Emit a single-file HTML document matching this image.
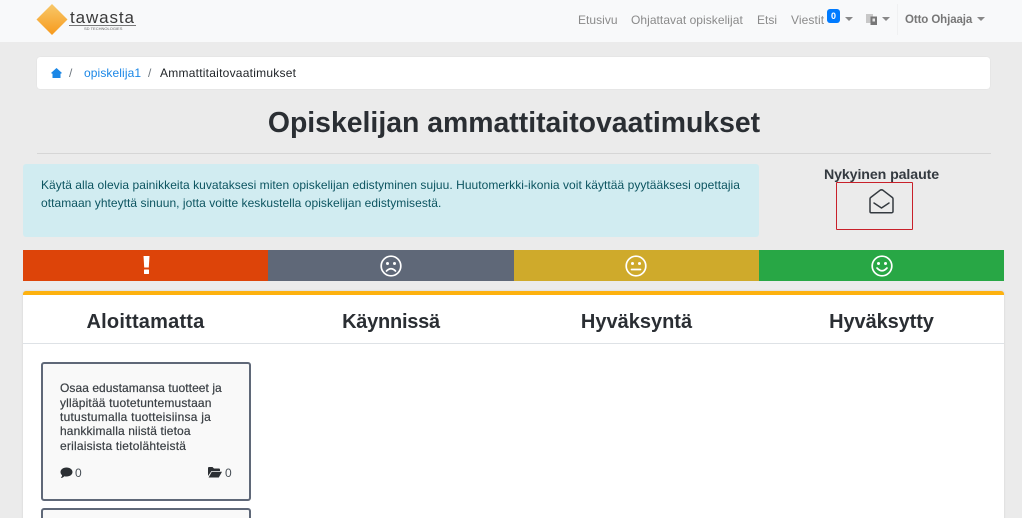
<!DOCTYPE html>
<html lang="fi"><head><meta charset="utf-8"><title>Opiskelijan ammattitaitovaatimukset</title>
<style>
html,body{margin:0;padding:0;width:1022px;height:518px;overflow:hidden}
body{background:#ebebeb;font-family:"Liberation Sans",sans-serif;color:#212529}
#w{position:relative;width:1022px;height:518px;overflow:hidden;background:#ebebeb}
.a{position:absolute;white-space:nowrap}
.nav{color:#8a8a8a;font-size:12px;top:13px;line-height:14px}
.h{font-size:20px;font-weight:bold;top:310px;line-height:24px;color:#2a2e33;transform:translateX(-50%)}
.bar{position:absolute;top:250px;height:31px}
.car{position:absolute;width:0;height:0;border-left:4px solid transparent;border-right:4px solid transparent;border-top:4px solid #888}
.l{position:absolute;left:60px;white-space:nowrap;font-size:12px;line-height:14px;color:#3a3f44;-webkit-text-stroke:.2px #3a3f44}
svg{position:absolute;overflow:visible}
</style></head><body><div id="w">
<div class="a" style="left:0;top:0;width:1022px;height:42px;background:#f8f9fa"></div>

<svg style="left:36px;top:4px" width="32" height="32" viewBox="0 0 32 32"><defs><linearGradient id="g" x1="0" y1="0" x2="0" y2="1"><stop offset="0" stop-color="#f7c86a"/><stop offset="1" stop-color="#f79a1c"/></linearGradient></defs><polygon points="16,0 31.500,15.500 16,31 .5,15.500" fill="url(#g)"/></svg>
<div class="a" style="left:70px;top:8px;font-size:17px;line-height:20px;color:#3a3a3a;letter-spacing:.9px">tawasta</div>
<div class="a" style="left:69px;top:25px;width:67px;height:1px;background:#777"></div>
<div class="a" style="left:84px;top:26px;font-size:4px;line-height:5px;color:#666">SD TECHNOLOGIES</div>

<div class="a nav" style="left:578px;letter-spacing:.03px">Etusivu</div>
<div class="a nav" style="left:631px;letter-spacing:.05px">Ohjattavat opiskelijat</div>
<div class="a nav" style="left:757px">Etsi</div>
<div class="a nav" style="left:791px;letter-spacing:.1px">Viestit</div>
<div class="a" style="left:827px;top:9px;width:13px;height:14px;background:#007bff;border-radius:3px;color:#fff;font-size:9px;font-weight:bold;line-height:14px;text-align:center">0</div>
<div class="car" style="left:845px;top:17px"></div>
<svg style="left:866px;top:14px" width="12" height="12" viewBox="0 0 12 12"><rect x="0" y="0" width="7" height="9" fill="#c8c8c8"/><rect x="4.500" y="2.500" width="6.500" height="8.500" fill="#777"/><rect x="6.500" y="4.500" width="2.500" height="3" fill="#e5e5e5"/></svg>
<div class="car" style="left:882px;top:17px"></div>
<div class="a" style="left:897px;top:4px;width:1px;height:31px;background:#f0f1f2"></div>
<div class="a nav" style="left:905px;font-size:11.500px;font-weight:bold;color:#777;letter-spacing:-.1px">Otto Ohjaaja</div>
<div class="car" style="left:977px;top:17px"></div>

<div class="a" style="left:37px;top:57px;width:953px;height:32px;background:#fff;border-radius:3px;box-shadow:0 0 1px rgba(0,0,0,.12)"></div>
<svg style="left:51px;top:68px" width="11" height="10" viewBox="0 0 11 10"><path d="M5.500 0 L11 5 L9.800 5.800 L9.500 5.500 V10 H1.500 V5.500 L1.200 5.800 L0 5 Z" fill="#1b87e6"/></svg>
<div class="a" style="left:69px;top:66px;font-size:12px;line-height:14px;color:#6c757d">/</div>
<div class="a" style="left:84px;top:66px;font-size:12px;line-height:14px;color:#1b87e6;letter-spacing:.1px">opiskelija1</div>
<div class="a" style="left:148px;top:66px;font-size:12px;line-height:14px;color:#6c757d">/</div>
<div class="a" style="left:160px;top:66px;font-size:12px;line-height:14px;color:#212529;letter-spacing:.24px">Ammattitaitovaatimukset</div>

<div class="a" style="left:514px;top:105px;transform:translateX(-50%);font-size:28.400px;line-height:36px;font-weight:bold;color:#2a2e33">Opiskelijan ammattitaitovaatimukset</div>
<div class="a" style="left:37px;top:153px;width:954px;height:1px;background:#d6d6d6"></div>

<div class="a" style="left:23px;top:164px;width:736px;height:73px;background:#d1ecf1;border-radius:3px"></div>
<div class="a" style="left:41px;top:176px;font-size:12px;line-height:18px;color:#0c5460;letter-spacing:.045px">Käytä alla olevia painikkeita kuvataksesi miten opiskelijan edistyminen sujuu. Huutomerkki-ikonia voit käyttää pyytääksesi opettajia<br>ottamaan yhteyttä sinuun, jotta voitte keskustella opiskelijan edistymisestä.</div>

<div class="a" style="left:881.500px;top:166px;transform:translateX(-50%);font-size:14.200px;line-height:18px;font-weight:bold;color:#343a40;letter-spacing:-.1px">Nykyinen palaute</div>
<div class="a" style="left:836px;top:182px;width:77px;height:48px;box-sizing:border-box;border:1.500px solid #c8202a;border-radius:1px"></div>
<svg style="left:869px;top:189px" width="25" height="25" viewBox="0 0 25 25" fill="none" stroke="#343a40" stroke-width="1.500" stroke-linejoin="round" stroke-linecap="round"><path d="M1 10.500 L1 9.800 Q1 9 1.800 8.400 L11 1.300 Q12.500 .3 14 1.300 L23.200 8.400 Q24 9 24 9.800 V22.500 a1.200 1.200 0 0 1 -1.200 1.200 H2.200 a1.200 1.200 0 0 1 -1.200 -1.200 Z"/><path d="M5 14 L12.500 19 L20 14"/></svg>

<div class="bar" style="left:23px;width:245px;background:#dd4409"></div>
<div class="bar" style="left:268px;width:246px;background:#5f6878"></div>
<div class="bar" style="left:514px;width:245px;background:#cfaa2b"></div>
<div class="bar" style="left:759px;width:245px;background:#28a745"></div>
<svg style="left:142px;top:255px" width="9" height="19" viewBox="0 0 9 19"><path d="M1.500 1 H7.500 L6.800 12.500 H2.200 Z" fill="#fff"/><rect x="2" y="14.500" width="5" height="4.500" rx=".5" fill="#fff"/></svg>
<svg style="left:380px;top:255px" width="22" height="22" viewBox="0 0 22 22" fill="none" stroke="#fff" stroke-width="1.700" stroke-linecap="round"><circle cx="11" cy="11" r="9.800"/><circle cx="7.500" cy="8.500" r="1.500" fill="#fff" stroke="none"/><circle cx="14.500" cy="8.500" r="1.500" fill="#fff" stroke="none"/><path d="M6.500 16 Q11 11.500 15.500 16"/></svg>
<svg style="left:625px;top:255px" width="22" height="22" viewBox="0 0 22 22" fill="none" stroke="#fff" stroke-width="1.700" stroke-linecap="round"><circle cx="11" cy="11" r="9.800"/><circle cx="7.500" cy="8.500" r="1.500" fill="#fff" stroke="none"/><circle cx="14.500" cy="8.500" r="1.500" fill="#fff" stroke="none"/><path d="M6.500 14.500 H15.500"/></svg>
<svg style="left:871px;top:255px" width="22" height="22" viewBox="0 0 22 22" fill="none" stroke="#fff" stroke-width="1.700" stroke-linecap="round"><circle cx="11" cy="11" r="9.800"/><circle cx="7.500" cy="8.500" r="1.500" fill="#fff" stroke="none"/><circle cx="14.500" cy="8.500" r="1.500" fill="#fff" stroke="none"/><path d="M6 13 Q11 18.500 16 13"/></svg>

<div class="a" style="left:23px;top:291px;width:981px;height:240px;background:#fff;border-top:4px solid #fdb10f;border-radius:3px 3px 0 0;box-sizing:border-box;box-shadow:0 0 2px rgba(0,0,0,.12)"></div>
<div class="a h" style="left:145.500px;letter-spacing:.2px">Aloittamatta</div>
<div class="a h" style="left:391px;letter-spacing:-.25px">Käynnissä</div>
<div class="a h" style="left:636.500px">Hyväksyntä</div>
<div class="a h" style="left:881.500px;letter-spacing:-.1px">Hyväksytty</div>
<div class="a" style="left:23px;top:343px;width:981px;height:1px;background:#dee2e6"></div>

<div class="a" style="left:41px;top:362px;width:210px;height:139px;box-sizing:border-box;background:#f9f9f9;border:2px solid #5f6878;border-radius:3px"></div>
<div class="l" style="top:381px;letter-spacing:.06px">Osaa edustamansa tuotteet ja</div>
<div class="l" style="top:396px;letter-spacing:.18px">ylläpitää tuotetuntemustaan</div>
<div class="l" style="top:410px;letter-spacing:.24px">tutustumalla tuotteisiinsa ja</div>
<div class="l" style="top:424px;letter-spacing:.13px">hankkimalla niistä tietoa</div>
<div class="l" style="top:439px;letter-spacing:.21px">erilaisista tietolähteistä</div>
<svg style="left:60px;top:467px" width="13" height="12" viewBox="0 0 13 12"><path d="M6.500 0.500 C10 0.500 12.500 2.500 12.500 5 C12.500 7.500 10 9.500 6.500 9.500 C5.800 9.500 5 9.400 4.400 9.200 C3.500 10.200 2.200 10.800 0.800 11 C1.600 10 2 9 2.100 8.200 C1 7.400 .5 6.300 .5 5 C.5 2.500 3 .5 6.500 .5 Z" fill="#2b2f33"/></svg>
<div class="a" style="left:75px;top:466px;font-size:12px;line-height:14px;color:#495057">0</div>
<svg style="left:208px;top:467px" width="14" height="11" viewBox="0 0 14 11"><path d="M0 1 a1 1 0 0 1 1 -1 H4.500 L6 1.500 H11 a1 1 0 0 1 1 1 V4 H3.500 L0 9 Z" fill="#2b2f33"/><path d="M3.800 4.800 H14 L10.800 10.500 H.6 Z" fill="#2b2f33"/></svg>
<div class="a" style="left:225px;top:466px;font-size:12px;line-height:14px;color:#495057">0</div>

<div class="a" style="left:41px;top:508px;width:210px;height:30px;box-sizing:border-box;background:#f9f9f9;border:2px solid #5f6878;border-radius:3px"></div>
</div></body></html>
